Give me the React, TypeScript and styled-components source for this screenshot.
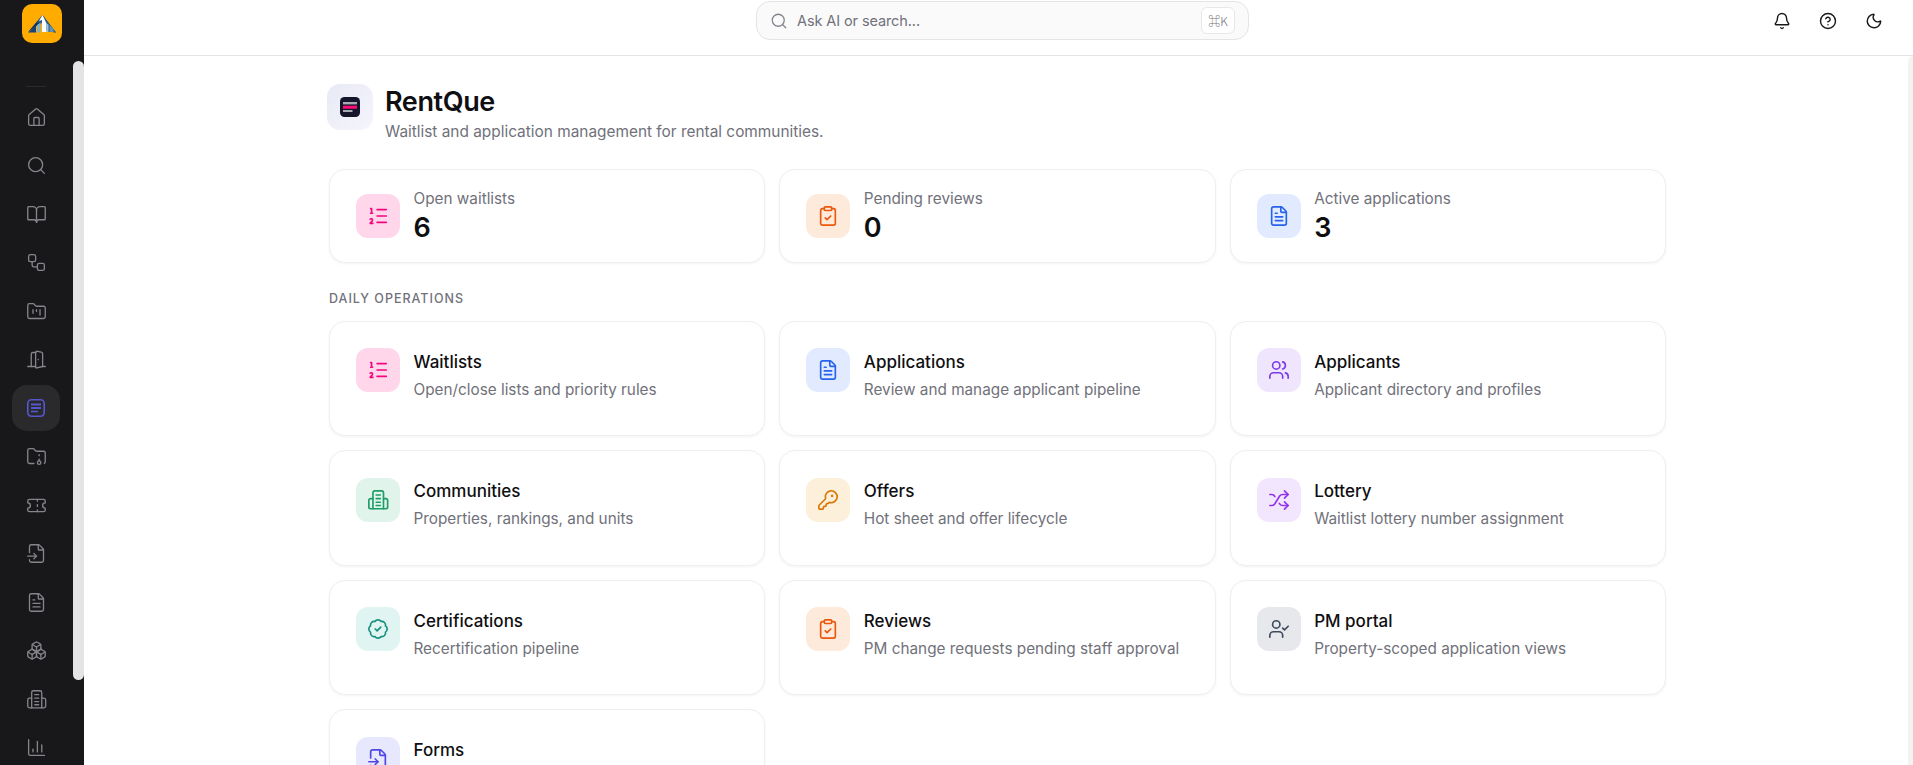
import React from 'react';
import styled, { createGlobalStyle } from 'styled-components';
import {
  House, Search, BookOpen, Workflow, FolderKanban, DoorOpen, FolderArchive, Ticket, FileInput, FileText,
  Boxes, ChartColumn, Bell, CircleHelp, Moon, ListOrdered, ClipboardCheck, Users, KeyRound,
  Shuffle, BadgeCheck, UserCheck,
} from 'lucide-react';

const Global = createGlobalStyle`
  html, body { margin: 0; padding: 0; height: 100%; overflow: hidden; background: #fff; }
  body { font-family: Inter, "Noto Sans", "Liberation Sans", sans-serif; color: #0f0f12; }
  * { box-sizing: border-box; }
`;

const Shell = styled.div`
  display: flex;
  height: 100vh;
  overflow: hidden;
`;

const Sidebar = styled.aside`
  position: relative;
  flex: 0 0 84px;
  background: #18181b;
  padding: 4px 24px 0 12px;
  display: flex;
  flex-direction: column;
  align-items: center;
  overflow: hidden;
`;

const SideThumb = styled.div`
  position: absolute;
  top: 61px;
  left: 73px;
  width: 11px;
  height: 619px;
  background: #e4e4e7;
  border-radius: 6px;
`;

const Logo = styled.div`
  flex: 0 0 39px;
  width: 40px;
  margin-left: 12px;
  border-radius: 10px;
  background: #ffab00;
  display: flex;
  align-items: center;
  justify-content: center;
`;

const SideDivider = styled.div`
  flex: 0 0 1px;
  width: 20px;
  margin: 43px 0 7px;
  background: #2a2a2e;
`;

const SideItem = styled.div<{ $active?: boolean }>`
  flex: 0 0 46px;
  width: 48px;
  margin-bottom: 2.5px;
  border-radius: 15px;
  display: flex;
  align-items: center;
  justify-content: center;
  color: ${p => (p.$active ? '#5457cd' : '#85858b')};
  background: ${p => (p.$active ? '#2a2a2d' : 'transparent')};
`;

const Column = styled.div`
  position: relative;
  flex: 1;
  min-width: 0;
  display: flex;
  flex-direction: column;
`;

const PageThumb = styled.div`
  position: absolute;
  top: 56px;
  right: 0;
  bottom: 0;
  width: 5px;
  background: #f3f3f4;
  border-top-left-radius: 5px;
`;

const Topbar = styled.header`
  flex: 0 0 56px;
  display: grid;
  grid-template-columns: 1fr 493px 1fr;
  align-items: start;
  padding: 1px 21px 0 29px;
  border-bottom: 1px solid #e4e4e7;
`;

const SearchBox = styled.div`
  grid-column: 2;
  height: 39px;
  display: flex;
  align-items: center;
  padding: 0 13px;
  gap: 9px;
  background: #fafafa;
  border: 1px solid #e4e4e7;
  border-radius: 14px;
  color: #85858d;
`;

const SearchText = styled.span`
  flex: 1;
  font-size: 14.5px;
  letter-spacing: -0.1px;
  color: #71717a;
`;

const Kbd = styled.span`
  width: 34px;
  height: 27px;
  display: flex;
  align-items: center;
  justify-content: center;
  background: #fff;
  border: 1px solid #e8e8ea;
  border-radius: 6px;
  font-family: "Noto Sans CJK JP", "DejaVu Sans", sans-serif;
  font-size: 12px;
  font-weight: 300;
  color: #71717a;
`;

const TopIcons = styled.div`
  grid-column: 3;
  justify-self: end;
  display: flex;
  gap: 10px;
  height: 40px;
  align-items: center;
`;

const TopBtn = styled.span`
  width: 36px;
  display: flex;
  justify-content: center;
  color: #18181b;
`;

const Main = styled.main`
  flex: 1;
  min-height: 0;
  overflow: hidden;
  padding: 28px 2px 0 0;
`;

const Content = styled.div`
  width: 1337px;
  margin: 0 auto;
`;

const PageHead = styled.div`
  display: flex;
  gap: 12px;
  height: 58px;
  margin: 0 0 27px -2px;
`;

const HeadIcon = styled.div`
  flex: 0 0 46px;
  height: 46px;
  border-radius: 13px;
  background: linear-gradient(135deg, #e9e9f6, #f5f5fc);
  display: flex;
  align-items: center;
  justify-content: center;
`;

const HeadText = styled.div`
  padding-top: 1px;
`;

const Title = styled.h1`
  margin: 0 0 2px;
  font-size: 27px;
  line-height: 34px;
  font-weight: 600;
  letter-spacing: -0.4px;
  color: #0f0f12;
`;

const Sub = styled.p`
  margin: 0;
  font-size: 15.4px;
  line-height: 22px;
  color: #71717a;
`;

const Grid = styled.div`
  display: grid;
  grid-template-columns: repeat(3, 1fr);
  column-gap: 14px;
`;

const NavGrid = styled(Grid)`
  row-gap: 14px;
  grid-auto-rows: 115.5px;
`;

const Card = styled.div`
  display: flex;
  gap: 13.5px;
  padding: 0 26px;
  background: #fff;
  border: 1px solid #efeff1;
  border-radius: 16px;
  box-shadow: 0 1px 3px rgba(0, 0, 0, 0.05);
`;

const StatCard = styled(Card)`
  height: 93.5px;
  align-items: center;
`;

const NavCard = styled(Card)`
  padding-top: 26.5px;
  align-items: flex-start;
`;

const Tile = styled.div<{ $bg: string; $fg: string }>`
  flex: 0 0 44px;
  height: 44px;
  border-radius: 12px;
  background: ${p => p.$bg};
  color: ${p => p.$fg};
  display: flex;
  align-items: center;
  justify-content: center;
`;

const StatText = styled.div`
  padding-top: 3px;
`;

const StatLabel = styled.div`
  font-size: 15.3px;
  line-height: 20px;
  color: #71717a;
`;

const StatValue = styled.div`
  margin-top: 1px;
  font-size: 27px;
  line-height: 36px;
  font-weight: 600;
  color: #0f0f12;
`;

const SectionLabel = styled.div`
  margin: 26.5px 0 11.5px;
  font-size: 12.5px;
  line-height: 20px;
  font-weight: 500;
  letter-spacing: 1px;
  color: #71717a;
  text-transform: uppercase;
`;

const NavText = styled.div`
  padding-top: 0.5px;
`;

const NavTitle = styled.div`
  font-size: 17px;
  line-height: 26px;
  font-weight: 500;
  letter-spacing: 0;
  color: #0f0f12;
`;

const NavDesc = styled.div`
  margin-top: 4px;
  font-size: 15.3px;
  line-height: 22px;
  color: #71717a;
`;

const tones = {
  pink: ['#ffd6ea', '#f5057f'],
  orange: ['#fdeadb', '#ea580c'],
  blue: ['#e1eafe', '#2563eb'],
  purple: ['#efe6fe', '#7c3aed'],
  violet: ['#f2e6fe', '#9333ea'],
  green: ['#e0f4ec', '#1f9d68'],
  amber: ['#fcf0da', '#d97706'],
  teal: ['#e0f5f1', '#158f7e'],
  slate: ['#e6e8ec', '#3f4a5f'],
  indigo: ['#e7e7fd', '#4f46e5'],
} as const;

type Tone = keyof typeof tones;
type IcoProps = { size?: number; strokeWidth?: number };
type Ico = React.ComponentType<IcoProps>;

const TowerIcon = ({ size = 22, strokeWidth = 1.8 }: IcoProps) => (
  <svg width={size} height={size} viewBox="0 0 24 24" fill="none" stroke="currentColor" strokeWidth={strokeWidth} strokeLinecap="round" strokeLinejoin="round">
    <path d="M6.5 21.5V4a2 2 0 0 1 2-2h7.5a2 2 0 0 1 2 2v17.5" />
    <path d="M6.5 10.5H4a2 2 0 0 0-2 2v7a2 2 0 0 0 2 2h16.5a2 2 0 0 0 2-2v-7a2 2 0 0 0-2-2H18" />
    <path d="M10 6.5h4.5M10 10.5h4.5M10 14.5h4.5M10 18h4.5" />
  </svg>
);

const stats: { label: string; value: string; tone: Tone; icon: Ico }[] = [
  { label: 'Open waitlists', value: '6', tone: 'pink', icon: ListOrdered },
  { label: 'Pending reviews', value: '0', tone: 'orange', icon: ClipboardCheck },
  { label: 'Active applications', value: '3', tone: 'blue', icon: FileText },
];

const navs: { title: string; desc?: string; tone: Tone; icon: Ico }[] = [
  { title: 'Waitlists', desc: 'Open/close lists and priority rules', tone: 'pink', icon: ListOrdered },
  { title: 'Applications', desc: 'Review and manage applicant pipeline', tone: 'blue', icon: FileText },
  { title: 'Applicants', desc: 'Applicant directory and profiles', tone: 'purple', icon: Users },
  { title: 'Communities', desc: 'Properties, rankings, and units', tone: 'green', icon: TowerIcon },
  { title: 'Offers', desc: 'Hot sheet and offer lifecycle', tone: 'amber', icon: KeyRound },
  { title: 'Lottery', desc: 'Waitlist lottery number assignment', tone: 'violet', icon: Shuffle },
  { title: 'Certifications', desc: 'Recertification pipeline', tone: 'teal', icon: BadgeCheck },
  { title: 'Reviews', desc: 'PM change requests pending staff approval', tone: 'orange', icon: ClipboardCheck },
  { title: 'PM portal', desc: 'Property-scoped application views', tone: 'slate', icon: UserCheck },
  { title: 'Forms', tone: 'indigo', icon: FileInput },
];

const RowsIcon = () => (
  <svg width="20" height="20" viewBox="0 0 20 20" fill="none" stroke="currentColor" strokeWidth="1.6">
    <rect x="1.8" y="1.8" width="16.4" height="16.4" rx="3.6" />
    <path d="M5 6.5h10M5 10h10" strokeWidth="1.8" />
    <path d="M5 13.5h7" strokeWidth="1.6" />
  </svg>
);

const sideItems: { icon: Ico; active?: boolean }[] = [
  { icon: House }, { icon: Search }, { icon: BookOpen }, { icon: Workflow }, { icon: FolderKanban },
  { icon: DoorOpen }, { icon: RowsIcon, active: true }, { icon: FolderArchive }, { icon: Ticket },
  { icon: FileInput }, { icon: FileText }, { icon: Boxes }, { icon: TowerIcon }, { icon: ChartColumn },
];

const LogoMark = () => (
  <svg width="40" height="39" viewBox="0 0 40 39">
    <path d="M20.5 11L34 28.5 25 27.5 20 18 6 28z" fill="#12305f" />
    <path d="M20.5 11l-6 8 3-.5 1 2 2.5-3.5 5.5 9.5L34 28.5z" fill="#2a5d92" />
    <path d="M20.5 11l-3.5 6 3-1v12h4.5V19.5z" fill="#fff" />
    <path d="M24.5 19.5l2 1.2V28h-2z" fill="#9ec6dc" />
    <path d="M27.5 21l4 4v3h-4z" fill="#5f93b5" />
    <path d="M6 28.5l8-7v7z" fill="#1a4276" />
    <path d="M15 21v7.5h3.5V18.5z" fill="#7fb2cc" />
  </svg>
);

const HeadMark = () => (
  <svg width="20" height="20" viewBox="0 0 20 20">
    <rect width="20" height="20" rx="4.5" fill="#14142a" />
    <rect x="3" y="5" width="14" height="2.4" fill="#a9a9b4" />
    <rect x="3" y="8.7" width="14" height="3" fill="#ff0a78" />
    <rect x="3" y="13" width="9.5" height="2" fill="#a9a9b4" />
  </svg>
);

export default function App() {
  return (
    <Shell>
      <Global />
      <Sidebar>
        <Logo><LogoMark /></Logo>
        <SideDivider />
        {sideItems.map((s, i) => (
          <SideItem key={i} $active={s.active}>
            <s.icon size={21} strokeWidth={1.5} />
          </SideItem>
        ))}
        <SideThumb />
      </Sidebar>
      <Column>
        <Topbar>
          <SearchBox>
            <Search size={18} strokeWidth={1.7} />
            <SearchText>Ask AI or search...</SearchText>
            <Kbd>⌘K</Kbd>
          </SearchBox>
          <TopIcons>
            <TopBtn><Bell size={18} strokeWidth={1.9} /></TopBtn>
            <TopBtn><CircleHelp size={18} strokeWidth={1.9} /></TopBtn>
            <TopBtn><Moon size={18} strokeWidth={1.9} /></TopBtn>
          </TopIcons>
        </Topbar>
        <Main>
          <Content>
            <PageHead>
              <HeadIcon><HeadMark /></HeadIcon>
              <HeadText>
                <Title>RentQue</Title>
                <Sub>Waitlist and application management for rental communities.</Sub>
              </HeadText>
            </PageHead>
            <Grid>
              {stats.map(s => (
                <StatCard key={s.label}>
                  <Tile $bg={tones[s.tone][0]} $fg={tones[s.tone][1]}><s.icon size={22} strokeWidth={1.8} /></Tile>
                  <StatText>
                    <StatLabel>{s.label}</StatLabel>
                    <StatValue>{s.value}</StatValue>
                  </StatText>
                </StatCard>
              ))}
            </Grid>
            <SectionLabel>Daily operations</SectionLabel>
            <NavGrid>
              {navs.map(n => (
                <NavCard key={n.title}>
                  <Tile $bg={tones[n.tone][0]} $fg={tones[n.tone][1]}><n.icon size={22} strokeWidth={1.8} /></Tile>
                  <NavText>
                    <NavTitle>{n.title}</NavTitle>
                    {n.desc && <NavDesc>{n.desc}</NavDesc>}
                  </NavText>
                </NavCard>
              ))}
            </NavGrid>
          </Content>
        </Main>
        <PageThumb />
      </Column>
    </Shell>
  );
}
